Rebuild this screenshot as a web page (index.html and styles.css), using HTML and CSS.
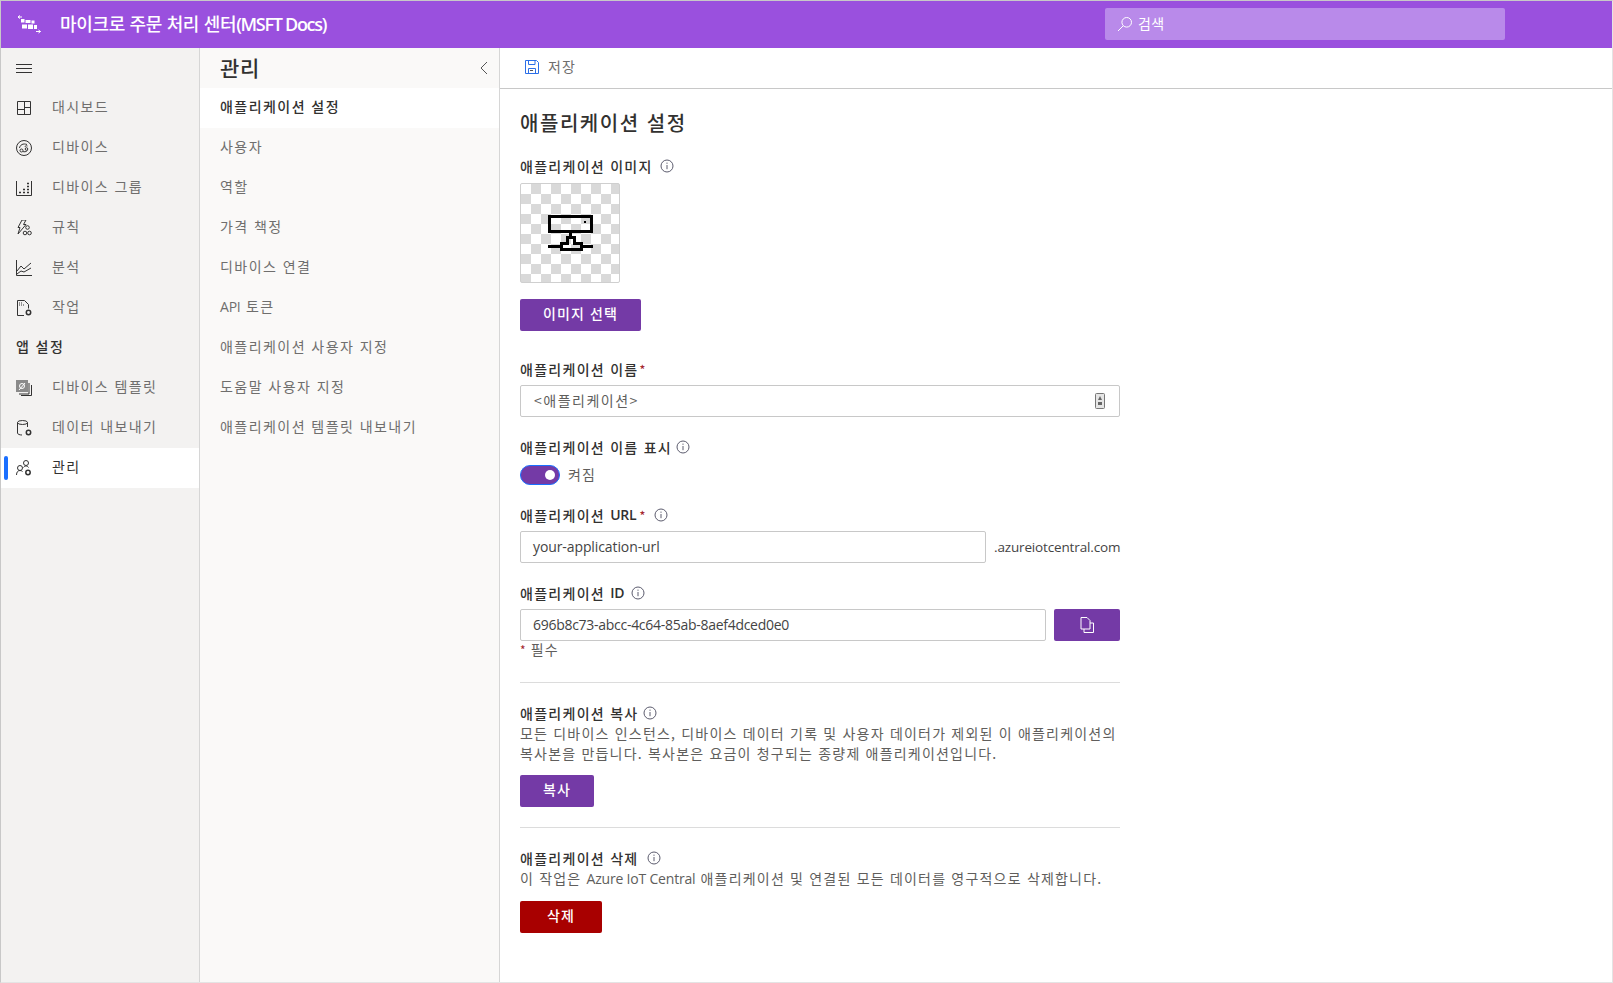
FILE: index.html
```html
<!DOCTYPE html>
<html lang="ko">
<head>
    <meta charset="UTF-8">
    <meta name="viewport" content="width=device-width, initial-scale=1.0">
    <title>애플리케이션 설정</title>
    <link rel="stylesheet" href="styles.css">
</head>
<body>
<svg class="defs" width="0" height="0">
    <symbol id="info" viewBox="0 0 14 14">
        <circle cx="7" cy="7" r="6" fill="none" stroke="#5c5c6e" stroke-width="1"/>
        <path d="M7 6v4.200M7 3.600v1.200" fill="none" stroke="#5c5c6e" stroke-width="1"/>
    </symbol>
</svg>
<div class="window">
    <header class="topbar">
        <svg class="logo" width="24" height="20" viewBox="0 0 24 20">
            <path d="M1 2h4M1 2l2-1.500M1 2l2 1.500M19 16.500h4.500M23.500 16.500l-2-1.500M23.500 16.500l-2 1.500" fill="none" stroke="#fff" stroke-width="1"/>
            <path d="M4 4h3.500v3.500H4zM8.500 5H13.500v3H8.500zM14.500 5.500h3v3h-3zM5 9.500h5v4H5zM11 9.500h5v4.500h-5zM17 10h3v4h-3z" fill="#fff"/>
        </svg>
        <h1 class="app-title">마이크로 주문 처리 센터<span class="lat">(MSFT Docs)</span></h1>
        <div class="search">
            <svg width="16" height="16" viewBox="0 0 16 16"><circle cx="9.700" cy="6.300" r="4.800" fill="none" stroke="#fff" stroke-width="1"/><path d="M6.200 9.800 1 15" stroke="#fff" stroke-width="1"/></svg>
            <span>검색</span>
        </div>
    </header>
    <div class="layout">
        <nav class="sidenav">
            <div class="nav-item">
                <svg width="16" height="16" viewBox="0 0 16 16"><path d="M0 4.500h16M0 8.500h16M0 12.500h16" stroke="#333" stroke-width="1"/></svg>
            </div>
            <a class="nav-item">
                <svg width="16" height="16" viewBox="0 0 16 16" fill="none" stroke="#333"><path d="M1.500 1.500h13v13h-13zM1.500 9.500h7M8.500 1.500v13M8.500 7.500h6"/></svg>
                <span>대시보드</span>
            </a>
            <a class="nav-item">
                <svg width="16" height="16" viewBox="0 0 16 16" fill="none" stroke="#333"><circle cx="8" cy="8" r="7.500"/><circle cx="5.500" cy="10.500" r="1.500"/><circle cx="10.500" cy="9" r="1.300"/><path d="M3.500 8C4 5 7 3 11 4.500M7 11.500c1 .5 3 .5 4.500-1M9 7C9 6 10 5.500 11.500 6"/></svg>
                <span>디바이스</span>
            </a>
            <a class="nav-item">
                <svg width="16" height="16" viewBox="0 0 16 16" fill="none" stroke="#333"><path d="M.5 1v14.500h15V1"/><path d="M3 12.500h2M7 12.500h2M11 12.500h2M7 9.500h2M11 9.500h2M11 6.500h2M11 3.500h2" stroke-width="1.500"/></svg>
                <span>디바이스 그룹</span>
            </a>
            <a class="nav-item">
                <svg width="16" height="16" viewBox="0 0 16 16" fill="none" stroke="#333"><path d="M6 0h4L7.500 4.500h2.500L2 14l2-6.500H2z"/><circle cx="11.500" cy="7.500" r="1.800"/><circle cx="9" cy="13" r="1.800"/><circle cx="13.500" cy="13" r="1.800"/></svg>
                <span>규칙</span>
            </a>
            <a class="nav-item">
                <svg width="16" height="16" viewBox="0 0 16 16" fill="none" stroke="#333"><path d="M.5 0v15.500H16"/><path d="M1 11l4-5 3 3 7-6M1 14l4-3 3 1 7-4"/></svg>
                <span>분석</span>
            </a>
            <a class="nav-item">
                <svg width="16" height="16" viewBox="0 0 16 16" fill="none" stroke="#333"><path d="M8 15.500H1.500V.5h7l4 4v4"/><path d="M3 3h4M3 5h6" stroke-dasharray="1 1"/><circle cx="12.500" cy="12.500" r="2.200" stroke-width="1.500"/></svg>
                <span>작업</span>
            </a>
            <div class="nav-section">앱 설정</div>
            <a class="nav-item">
                <svg width="16" height="16" viewBox="0 0 16 16" fill="none" stroke="#333"><path d="M0 0h12v12H0z" fill="#8a8a8a" stroke="none"/><path d="M13 3v11H3M15.500 5v10.500H5"/><circle cx="6" cy="6" r="2.500" stroke="#fff"/><path d="M3 10l6-7" stroke="#fff"/></svg>
                <span>디바이스 템플릿</span>
            </a>
            <a class="nav-item">
                <svg width="16" height="16" viewBox="0 0 16 16" fill="none" stroke="#333"><ellipse cx="6.500" cy="2.500" rx="5" ry="2"/><path d="M1.500 2.500V13c0 1.200 2 2 4.500 2M11.500 2.500V7"/><circle cx="12.500" cy="12.500" r="2.200" stroke-width="1.500"/></svg>
                <span>데이터 내보내기</span>
            </a>
            <a class="nav-item is-active">
                <svg width="16" height="16" viewBox="0 0 16 16" fill="none" stroke="#333"><circle cx="10" cy="3" r="2.500"/><circle cx="4" cy="8" r="2.500"/><path d="M.5 15c0-3 1.500-4.500 3.500-4.500 1 0 1.800.3 2.500 1M7.500 7.500c.6-1 1.500-1.500 2.500-1.500s2 .5 2.500 1.500"/><circle cx="12" cy="12.500" r="2.200" stroke-width="1.500"/></svg>
                <span>관리</span>
            </a>
        </nav>
        <aside class="subnav">
            <div class="subnav-head">
                <h2>관리</h2>
                <svg width="8" height="14" viewBox="0 0 8 14"><path d="M7 1 1 7l6 6" fill="none" stroke="#555" stroke-width="1"/></svg>
            </div>
            <a class="sub-item is-active">애플리케이션 설정</a>
            <a class="sub-item">사용자</a>
            <a class="sub-item">역할</a>
            <a class="sub-item">가격 책정</a>
            <a class="sub-item">디바이스 연결</a>
            <a class="sub-item"><span class="lat">API</span> 토큰</a>
            <a class="sub-item">애플리케이션 사용자 지정</a>
            <a class="sub-item">도움말 사용자 지정</a>
            <a class="sub-item">애플리케이션 템플릿 내보내기</a>
        </aside>
        <main class="main">
            <div class="commandbar">
                <svg width="16" height="16" viewBox="0 0 16 16" fill="none" stroke="#2b6fe8"><path d="M1.500 1.500h11l2 2v11h-13z"/><path d="M4.500 1.500v4h6.500v-4M4.500 14.500v-5h7v5"/><path d="M6 11.500h3" stroke="#555"/></svg>
                <span>저장</span>
            </div>
            <div class="content">
                <h2 class="page-title">애플리케이션 설정</h2>

                <div class="label label-image">애플리케이션 이미지 <svg class="info info-image"><use href="#info"/></svg></div>
                <div class="checker">
                    <svg width="45" height="36" viewBox="0 0 45 36" fill="none" stroke="#000" stroke-width="3" shape-rendering="crispEdges">
                        <rect x="1.500" y="1.500" width="42" height="15"/>
                        <path d="M22.500 18v4M13 34.500h20v-6.500h-7v-6h-7v6h-6zM0 31.500h13M33 31.500h12"/>
                        <path d="M36 6h2v2h-2z" fill="#000" stroke="none"/>
                    </svg>
                </div>
                <button class="btn btn-pick"><span>이미지 선택</span></button>

                <div class="label label-name">애플리케이션 이름<span class="req">*</span></div>
                <div class="field">
                    <span class="placeholder">&lt;애플리케이션&gt;</span>
                    <svg width="10" height="16" viewBox="0 0 10 16"><rect x=".5" y=".5" width="9" height="15" rx="1" fill="#e6e6e6" stroke="#777"/><path d="M5 3 7 7H3zM3 9h4v3H3z" fill="#666"/></svg>
                </div>

                <div class="label label-show">애플리케이션 이름 표시 <svg class="info info-tight"><use href="#info"/></svg></div>
                <div class="toggle-row">
                    <span class="toggle"><span class="knob"></span></span>
                    <span class="toggle-text">켜짐</span>
                </div>

                <div class="label label-url">애플리케이션 <span class="lat">URL</span><span class="req req-url">*</span> <svg class="info info-wide"><use href="#info"/></svg></div>
                <div class="field-row">
                    <div class="field field-grow"><span class="value">your-application-url</span></div>
                    <span class="suffix">.azureiotcentral.com</span>
                </div>

                <div class="label label-id">애플리케이션 <span class="lat">ID</span> <svg class="info info-wide"><use href="#info"/></svg></div>
                <div class="field-row">
                    <div class="field field-grow"><span class="value value-id">696b8c73-abcc-4c64-85ab-8aef4dced0e0</span></div>
                    <button class="btn btn-copy">
                        <svg width="14" height="16" viewBox="0 0 14 16" fill="none" stroke="#fff"><path d="M1 .5h6l3 3V12H1zM4 12v3.500h9.500V6H10"/></svg>
                    </button>
                </div>
                <div class="required-note"><span class="req">*</span><span class="note-text">필수</span></div>

                <hr class="divider">

                <div class="label">애플리케이션 복사 <svg class="info info-tight"><use href="#info"/></svg></div>
                <p class="desc">모든 디바이스 인스턴스, 디바이스 데이터 기록 및 사용자 데이터가 제외된 이 애플리케이션의<br>복사본을 만듭니다. 복사본은 요금이 청구되는 종량제 애플리케이션입니다.</p>
                <button class="btn btn-dup"><span>복사</span></button>

                <hr class="divider divider-second">

                <div class="label">애플리케이션 삭제 <svg class="info"><use href="#info"/></svg></div>
                <p class="desc">이 작업은 <span class="lat">Azure IoT Central</span> 애플리케이션 및 연결된 모든 데이터를 영구적으로 삭제합니다.</p>
                <button class="btn btn-danger"><span>삭제</span></button>
            </div>
        </main>
    </div>
</div>
</body>
</html>
```

FILE: styles.css
```css
* {
    box-sizing: border-box;
}

html, body {
    margin: 0;
    height: 100%;
}

body {
    font-family: "Noto Sans CJK KR", "Open Sans", sans-serif;
    font-size: 14px;
    color: #323130;
    letter-spacing: 1.1px;
    background: white;
}

.defs {
    display: none;
}

.lat {
    font-family: "Open Sans", sans-serif;
    letter-spacing: -0.2px;
}

.window {
    height: 983px;
    border: 1px solid #c8c8c8;
    border-bottom-color: #e4e4e4;
    border-right-color: #e4e4e4;
    display: flex;
    flex-direction: column;
    overflow: hidden;
}

.topbar {
    height: 47px;
    flex: none;
    display: flex;
    align-items: center;
    background: #9a50de;
    color: white;
    padding-left: 16px;
}

.logo {
    flex: none;
}

.app-title {
    margin: 0 0 2px 19px;
    font-size: 18px;
    font-weight: 500;
    line-height: 1;
    letter-spacing: -0.35px;
    width: 1045px;
    white-space: nowrap;
}

.app-title .lat {
    font-weight: 600;
    letter-spacing: -1.3px;
}

.search {
    width: 400px;
    height: 32px;
    margin-bottom: 1px;
    background: #b98aea;
    border-radius: 2px;
    display: flex;
    align-items: center;
    gap: 5px;
    padding-left: 12px;
    font-size: 14px;
    letter-spacing: 0.3px;
}

.search span {
    margin-bottom: 3px;
}

.layout {
    flex: 1;
    display: flex;
    min-height: 0;
}

.sidenav {
    width: 199px;
    flex: none;
    background: #f3f2f1;
    border-right: 1px solid #d6d6d6;
}

.nav-item {
    height: 40px;
    display: flex;
    align-items: center;
    gap: 20px;
    padding-left: 15px;
    color: #6f6e6d;
    letter-spacing: 1.4px;
    position: relative;
}

.nav-item svg {
    flex: none;
}

.nav-item span {
    margin-bottom: 5px;
}

.nav-item.is-active {
    background: white;
    color: #323130;
}

.nav-item.is-active::before {
    content: "";
    position: absolute;
    left: 3px;
    top: 8px;
    width: 4px;
    height: 24px;
    border-radius: 2px;
    background: #1a6fff;
}

.nav-section {
    height: 40px;
    line-height: 36px;
    padding-left: 15px;
    font-weight: 500;
    letter-spacing: 1.4px;
    color: #323130;
}

.subnav {
    width: 300px;
    flex: none;
    background: #faf9f8;
    border-right: 1px solid #d6d6d6;
}

.subnav-head {
    height: 40px;
    display: flex;
    align-items: center;
    justify-content: space-between;
    padding: 0 11px 0 20px;
}

.subnav-head h2 {
    margin: 0 0 3px;
    font-size: 21px;
    font-weight: 500;
    letter-spacing: 0.6px;
}

.sub-item {
    display: block;
    height: 40px;
    line-height: 36px;
    padding-left: 20px;
    color: #6f6e6d;
    letter-spacing: 1.45px;
}

.sub-item.is-active {
    background: white;
    color: #323130;
    font-weight: 500;
}

.main {
    flex: 1;
    min-width: 0;
}

.commandbar {
    height: 41px;
    border-bottom: 1px solid #c8c8c8;
    display: flex;
    align-items: center;
    gap: 8px;
    padding: 0 0 2px 24px;
    color: #6f6e6d;
}

.commandbar span {
    margin-bottom: 2px;
}

.content {
    width: 640px;
    padding: 20px 20px 0;
}

.page-title {
    margin: 0;
    height: 26px;
    line-height: 28px;
    font-size: 20px;
    font-weight: 500;
    letter-spacing: 1.55px;
}

.label {
    height: 20px;
    padding-bottom: 2px;
    line-height: 18px;
    font-weight: 500;
    letter-spacing: 1.28px;
    display: flex;
    align-items: center;
    white-space: pre;
}

.label .lat {
    font-weight: 600;
}

.info {
    width: 14px;
    height: 14px;
    margin: -1px 0 0 3px;
}

.info-image {
    margin-left: 2px;
}

.info-tight {
    margin-left: -1px;
}

.info-wide {
    margin-left: 7px;
}

.req {
    color: #a4262c;
    margin-left: 1px;
    font-size: 12px;
}

.req-url {
    margin-left: 3px;
}

.label-image {
    margin-top: 22px;
}

.checker {
    width: 100px;
    height: 100px;
    margin-top: 6px;
    border: 1px solid #cfcfcf;
    border-radius: 2px;
    display: flex;
    align-items: center;
    justify-content: center;
    background-color: white;
    background-image: conic-gradient(#d9d9d9 25%, transparent 25% 50%, #d9d9d9 50% 75%, transparent 75%);
    background-size: 20px 20px;
}

.btn {
    font: inherit;
    letter-spacing: inherit;
    border: none;
    border-radius: 2px;
    height: 32px;
    color: white;
    background: #743aa6;
    font-weight: 500;
    padding: 0;
    display: flex;
    align-items: center;
    justify-content: center;
}

.btn span {
    margin-bottom: 4px;
}

.btn-pick {
    width: 121px;
    margin-top: 16px;
}

.label-name {
    margin-top: 29px;
}

.field {
    height: 32px;
    border: 1px solid #c8c8c8;
    border-radius: 2px;
    margin-top: 5px;
    padding: 0 14px 0 12px;
    display: flex;
    align-items: center;
    justify-content: space-between;
    background: white;
}

.placeholder {
    color: #605e5c;
    margin: 0 0 2px 1px;
    letter-spacing: 1.5px;
}

.value {
    font-family: "Open Sans", sans-serif;
    letter-spacing: -0.1px;
    color: #444;
    margin-bottom: 1px;
}

.value-id {
    letter-spacing: -0.28px;
}

.label-show {
    margin-top: 21px;
}

.toggle-row {
    display: flex;
    align-items: center;
    gap: 8px;
    margin-top: 7px;
    height: 20px;
}

.toggle {
    width: 40px;
    height: 20px;
    border-radius: 10px;
    background: #743aa6;
    border: 1px solid #1a6fff;
    display: flex;
    align-items: center;
    justify-content: flex-end;
    padding-right: 4px;
}

.knob {
    width: 10px;
    height: 10px;
    border-radius: 50%;
    background: white;
}

.toggle-text {
    color: #605e5c;
    margin-bottom: 3px;
}

.label-url {
    margin-top: 21px;
}

.field-row {
    display: flex;
    align-items: flex-end;
    gap: 8px;
}

.field-grow {
    flex: 1;
    min-width: 0;
}

.suffix {
    font-family: "Open Sans", sans-serif;
    width: 126px;
    text-align: right;
    letter-spacing: -0.15px;
    font-size: 13.5px;
    line-height: 32px;
    color: #444;
    white-space: nowrap;
}

.label-id {
    margin-top: 21px;
}

.btn-copy {
    width: 66px;
    flex: none;
}

.required-note {
    height: 18px;
    line-height: 16px;
    color: #605e5c;
}

.required-note .req {
    margin-left: 0;
}

.note-text {
    margin-left: 4px;
}

.divider {
    border: none;
    border-top: 1px solid #dcdcdc;
    margin: 23px 0 21px;
}

.divider-second {
    margin-top: 20px;
}

.desc {
    margin: -1px 0 1px;
    line-height: 20px;
    color: #605e5c;
    letter-spacing: 1.2px;
    white-space: nowrap;
}

.btn-dup {
    width: 74px;
    margin-top: 12px;
}

.btn-danger {
    width: 82px;
    margin-top: 12px;
    background: #a80000;
}
```
